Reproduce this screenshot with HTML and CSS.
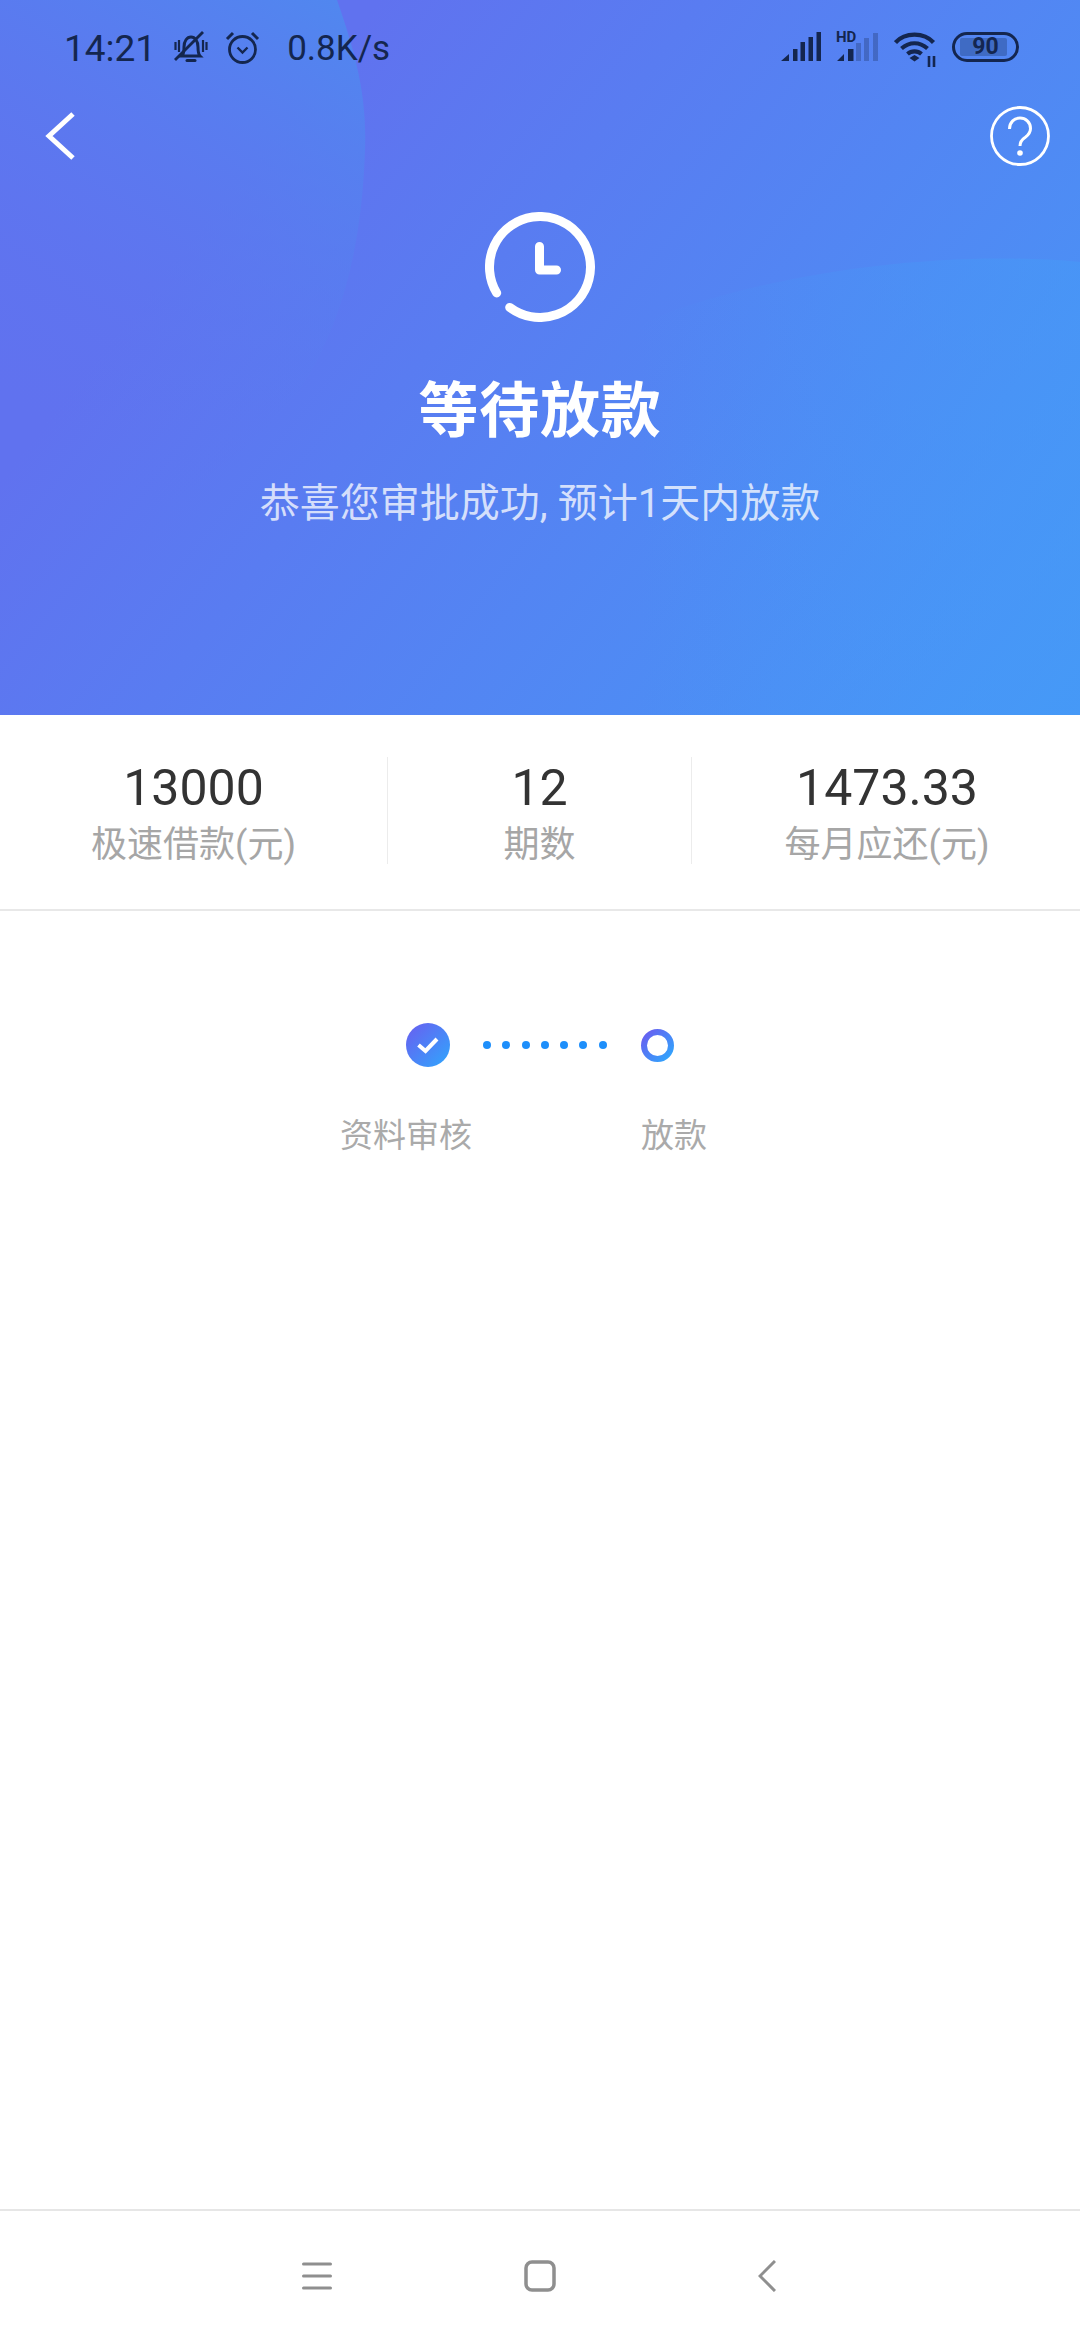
FILE: index.html
```html
<!DOCTYPE html>
<html lang="zh">
<head>
<meta charset="utf-8">
<title>等待放款</title>
<link rel="stylesheet" href="styles.css">
</head>
<body>
<div class="page">
  <header class="hero">
    <svg class="hero-bg" viewBox="0 0 1080 715" aria-hidden="true">
      <defs>
        <linearGradient id="bg" gradientUnits="userSpaceOnUse" x1="300" y1="100" x2="1080" y2="715">
          <stop offset="0" stop-color="#6072ef"/>
          <stop offset="1" stop-color="#4599f7"/>
        </linearGradient>
        <linearGradient id="blob1" gradientUnits="userSpaceOnUse" x1="360" y1="0" x2="60" y2="440">
          <stop offset="0" stop-color="#5088ef"/>
          <stop offset="1" stop-color="#5f74f0" stop-opacity="0"/>
        </linearGradient>
        <linearGradient id="blob2" gradientUnits="userSpaceOnUse" x1="1080" y1="0" x2="640" y2="0">
          <stop offset="0" stop-color="#4699f7" stop-opacity=".6"/>
          <stop offset="1" stop-color="#4699f7" stop-opacity="0"/>
        </linearGradient>
      </defs>
      <rect width="1080" height="715" fill="url(#bg)"/>
      <path d="M0 0H337C358 60 367 100 365 150C362 240 345 320 300 390C220 490 110 540 0 570Z" fill="url(#blob1)"/>
      <path d="M1080 262C950 250 800 270 690 305C580 340 480 430 430 715H1080Z" fill="url(#blob2)"/>
    </svg>
    <div class="status">
      <div class="status-left">
        <span class="time">14:21</span>
        <svg class="st-ic st-bell" width="34" height="32" viewBox="0 0 34 32" aria-hidden="true"><path d="M8 25c2-2 2-5 2-9 0-6 3-10 7-10s7 4 7 10c0 4 0 7 2 9z" fill="none" stroke="#14264f" stroke-width="3"/><path d="M13 29.500h8" stroke="#14264f" stroke-width="3" stroke-linecap="round"/><path d="M1 29 29 1" stroke="#14264f" stroke-width="2.800"/><path d="M1.500 11v8M5 9v12M29 9v12M32.500 11v8" stroke="#14264f" stroke-width="2.200"/></svg>
        <svg class="st-ic st-clock" width="35" height="33" viewBox="0 0 35 33" aria-hidden="true"><circle cx="17.500" cy="18.500" r="13" fill="none" stroke="#14264f" stroke-width="2.800"/><path d="M12.500 16.500l5 5 5-5" fill="none" stroke="#14264f" stroke-width="2.400"/><path d="M2 8 8 2M33 8l-6-6" stroke="#14264f" stroke-width="3"/></svg>
        <span class="speed">0.8K/s</span>
      </div>
      <div class="status-right">
        <svg class="sr-ic" width="40" height="30" viewBox="0 0 40 30" aria-hidden="true"><path d="M0 29l8-7v7zM12 17h4.500v12H12zM19.500 10H24v19h-4.500zM27.500 5H32v24h-4.500zM35.500 0H40v29h-4.500z" fill="#14264f"/></svg>
        <svg class="sr-ic sr-hd" width="42" height="34" viewBox="0 -4 42 34" aria-hidden="true"><path d="M1 29l7-7v7zM12 17h5.500v12H12z" fill="#14264f"/><path d="M20 11h5v18h-5zM28 6h5v23h-5zM37 1h5v28h-5z" fill="#14264f" opacity=".28"/><text x="0" y="10" class="hd">HD</text></svg>
        <svg class="sr-ic sr-wifi" width="43" height="35" viewBox="0 0 43 35" aria-hidden="true"><path d="M1.500 10.500C11 0 30 0 39.500 10.500M7.500 16.500c8-7 18-7 26 0M13.500 22c4-3.500 10-3.500 14 0" fill="none" stroke="#14264f" stroke-width="4.200"/><path d="M15.500 26l5-3 5 3-5 3.500z" fill="#14264f"/><path d="M35 24v11M40 24v11" stroke="#14264f" stroke-width="2.600"/></svg>
        <div class="battery"><span class="batt-fill"></span><span class="batt-num">90</span></div>
      </div>
    </div>
    <div class="topbar">
      <svg width="32" height="50" viewBox="0 0 32 50" aria-hidden="true"><path d="M29 3 5 25l24 22" fill="none" stroke="#fff" stroke-width="5"/></svg>
      <svg width="60" height="60" viewBox="0 0 60 60" aria-hidden="true"><circle cx="30" cy="30" r="28.500" fill="none" stroke="#fff" stroke-width="2.800"/><path d="M19.500 23c0-7 5-11 10.500-11s10.500 4 10.500 10.500c0 5-3 7-5.500 9-3 2-5 4-5 8.500" fill="none" stroke="#fff" stroke-width="3"/><circle cx="30" cy="47" r="2.800" fill="#fff"/></svg>
    </div>
    <div class="hero-main">
      <svg class="clock" width="110" height="110" viewBox="0 0 110 110" aria-hidden="true"><path d="M11.700 81A50.500 50.500 0 1 1 24.700 95.400" fill="none" stroke="#fff" stroke-width="9" stroke-linecap="round"/><path d="M54.500 34.500V58H71.500" fill="none" stroke="#fff" stroke-width="9" stroke-linecap="round" stroke-linejoin="round"/></svg>
      <h1 class="title">等待放款</h1>
      <p class="sub">恭喜您审批成功, 预计1天内放款</p>
    </div>
  </header>

  <section class="stats">
    <div class="stat stat-a"><div class="num">13000</div><div class="lab">极速借款(元)</div></div>
    <div class="stat stat-b"><div class="num">12</div><div class="lab">期数</div></div>
    <div class="stat stat-c"><div class="num">1473.33</div><div class="lab">每月应还(元)</div></div>
  </section>

  <main class="progress">
    <div class="track">
      <svg width="44" height="44" viewBox="0 0 44 44" aria-hidden="true"><defs><linearGradient id="dot" x1="0" y1="0" x2="1" y2="1"><stop offset="0" stop-color="#6a5df0"/><stop offset="1" stop-color="#2fa7fd"/></linearGradient></defs><circle cx="22" cy="22" r="22" fill="url(#dot)"/><path d="M12.500 22l7 6 11.500-12" fill="none" stroke="#fff" stroke-width="4"/></svg>
      <div class="dots"><i></i><i></i><i></i><i></i><i></i><i></i><i></i></div>
      <svg width="33" height="33" viewBox="0 0 33 33" aria-hidden="true"><defs><linearGradient id="ring" x1="0" y1="0" x2="1" y2="1"><stop offset="0" stop-color="#6a5df0"/><stop offset="1" stop-color="#2fa7fd"/></linearGradient></defs><circle cx="16.500" cy="16.500" r="13.500" fill="none" stroke="url(#ring)" stroke-width="6"/></svg>
    </div>
    <div class="steps"><span>资料审核</span><span>放款</span></div>
  </main>

  <nav class="navbar">
    <svg width="30" height="28" viewBox="0 0 30 28" aria-hidden="true"><path d="M1.500 2h27M1.500 14h27M1.500 26h27" stroke="#8f8f8f" stroke-width="3" stroke-linecap="round"/></svg>
    <svg class="nav-home" width="32" height="32" viewBox="0 0 32 32" aria-hidden="true"><rect x="2" y="2" width="28" height="28" rx="6" fill="none" stroke="#8f8f8f" stroke-width="3.500"/></svg>
    <svg class="nav-back" width="18" height="32" viewBox="0 0 18 32" aria-hidden="true"><path d="M17 1 2 16l15 15" fill="none" stroke="#8f8f8f" stroke-width="3"/></svg>
  </nav>
</div>
</body>
</html>
```
FILE: styles.css
```css
* { box-sizing: border-box; }
html, body { margin: 0; padding: 0; background: #fff; }
body { font-family: Roboto, "Noto Sans CJK SC", sans-serif; }
.page { width: 1080px; height: 2340px; display: flex; flex-direction: column; overflow: hidden; }

.hero { position: relative; height: 715px; flex: none; color: #fff; }
.hero-bg { position: absolute; left: 0; top: 0; width: 100%; height: 100%; }
.status, .topbar, .hero-main { position: relative; }

.status { height: 96px; display: flex; justify-content: space-between; align-items: center; padding: 0 61px 0 64px; color: #14264f; }
.status-left, .status-right { display: flex; align-items: center; }
.time { font-size: 37px; line-height: 40px; padding-top: 2px; }
.st-ic { margin-top: -2px; }
.st-bell { margin-left: 18px; }
.st-clock { margin-left: 17px; }
.speed { font-size: 35px; line-height: 40px; margin-left: 27px; padding-top: 2px; }
.sr-ic { margin-top: -2px; }
.sr-hd { margin-left: 15px; margin-top: -6px; }
.sr-wifi { margin-left: 16px; margin-top: 2px; }
.hd { font: 700 15px Roboto, sans-serif; fill: #14264f; }
.battery { position: relative; width: 67px; height: 30px; border: 3px solid #14264f; border-radius: 15px; margin-left: 15px; margin-top: -2px; display: flex; align-items: center; justify-content: center; }
.batt-fill { position: absolute; left: 5px; top: 3px; bottom: 3px; right: 9px; background: #3f6bc4; border-radius: 2px; }
.batt-num { position: relative; font: 700 23px/24px Roboto, sans-serif; color: #14264f; }

.topbar { display: flex; justify-content: space-between; align-items: center; padding: 0 30px 0 44px; height: 80px; }

.hero-main { display: flex; flex-direction: column; align-items: center; padding-top: 36px; }
.clock { display: block; }
.title { margin: 48px 0 0; font-size: 60px; line-height: 84px; font-weight: 700; letter-spacing: 0.7px; }
.sub { margin: 24px 0 0; font-size: 40px; line-height: 52px; color: rgba(255,255,255,.75); }

.stats { height: 196px; flex: none; display: flex; align-items: center; border-bottom: 2px solid #e8e8e8; }
.stat { height: 107px; display: flex; flex-direction: column; align-items: center; margin-top: -3px; padding-top: 2px; }
.stat-a { width: 388px; border-right: 1px solid #ececec; }
.stat-b { width: 304px; border-right: 1px solid #ececec; }
.stat-c { flex: 1; padding-left: 2px; }
.num { font-size: 50px; line-height: 58px; color: #333; }
.lab { font-size: 36px; line-height: 38px; margin-top: 9px; color: #a6a6a6; white-space: nowrap; }

.progress { flex: 1; display: flex; flex-direction: column; padding-top: 112px; }
.track { display: flex; align-items: center; height: 44px; padding-left: 406px; }
.dots { display: flex; gap: 11.300px; margin: 0 34px 0 33px; }
.dots i { width: 8px; height: 8px; border-radius: 50%; background: #1e8ffb; display: block; }
.steps { display: flex; margin-top: 46px; padding-left: 340px; font-size: 33px; line-height: 46px; color: #aaa; }
.steps span:first-child { width: 301px; }

.navbar { height: 131px; flex: none; border-top: 2px solid #e6e6e6; display: flex; align-items: center; padding-left: 302px; }
.nav-home { margin-left: 192px; }
.nav-back { margin-left: 202px; }
```
